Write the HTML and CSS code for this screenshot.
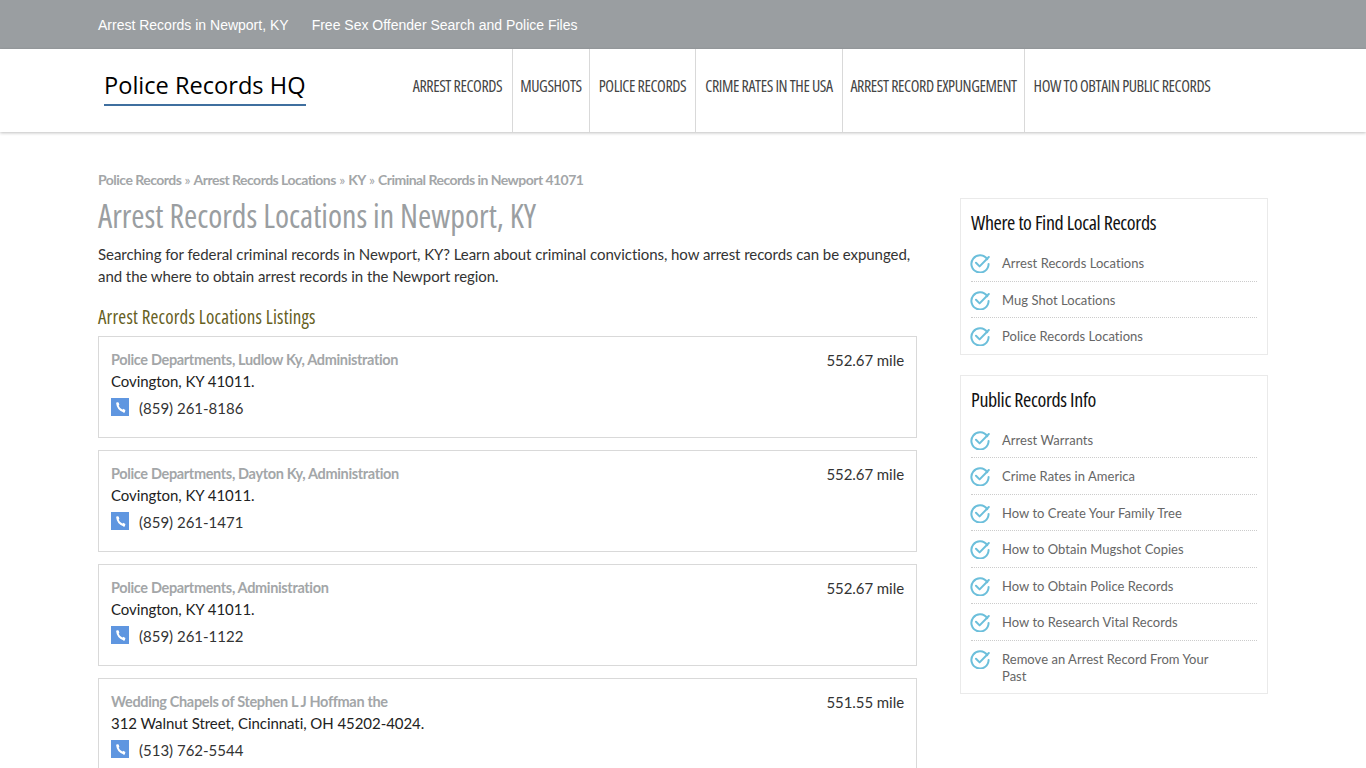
FILE: index.html
```html
<!doctype html>
<html lang="en">
<head>
  <title>Arrest Records Locations in Newport, KY</title>
  <meta http-equiv="Content-Type" content="text/html; charset=UTF-8" />
  <meta name="viewport" content="width=device-width, initial-scale=1.0">
  <link rel="stylesheet" href="styles.css">
</head>
<body>
  <svg class="defs" width="0" height="0">
    <symbol id="check" viewBox="0 0 20 20">
      <path d="M17.2 6.2A8.6 8.6 0 1 0 18.6 11" fill="none" stroke="#6cbfdb" stroke-width="2" stroke-linecap="round"/>
      <path d="M6 9.8l3.6 3.6L18.8 4" fill="none" stroke="#6cbfdb" stroke-width="2" stroke-linecap="round" stroke-linejoin="round"/>
    </symbol>
    <symbol id="phone" viewBox="0 0 18 18">
      <rect width="18" height="18" fill="#5f96e0"/>
      <path d="M6.4 5.6c0 3.4 2.6 6.6 6.4 7.6" fill="none" stroke="#fff" stroke-width="2.2" stroke-linecap="round"/>
      <path d="M5.4 4.4h2.2l.8 2.6-2.2.8zM11.4 12.4l.8-1.6 2.2 1.2-.6 2.4h-1.6z" fill="#fff"/>
    </symbol>
  </svg>

  <div class="topbar">
    <div class="container">
      <a href="#">Arrest Records in Newport, KY</a>
      <a href="#">Free Sex Offender Search and Police Files</a>
    </div>
  </div>

  <header class="header">
    <div class="container header-row">
      <a class="logo" href="#">Police Records HQ</a>
      <nav class="nav">
        <a href="#">Arrest Records</a>
        <a href="#">Mugshots</a>
        <a href="#">Police Records</a>
        <a href="#">Crime Rates in the USA</a>
        <a href="#">Arrest Record Expungement</a>
        <a href="#">How to Obtain Public Records</a>
      </nav>
    </div>
  </header>

  <div class="container page">
    <main class="main">
      <div class="crumbs">
        <a href="#">Police Records</a> » <a href="#">Arrest Records Locations</a> » <a href="#">KY</a> » <a href="#">Criminal Records in Newport 41071</a>
      </div>
      <h1>Arrest Records Locations in Newport, KY</h1>
      <p class="intro">Searching for federal criminal records in Newport, KY? Learn about criminal convictions, how arrest records can be expunged, and the where to obtain arrest records in the Newport region.</p>
      <h2>Arrest Records Locations Listings</h2>

      <div class="card">
        <div class="card-top"><a href="#">Police Departments, Ludlow Ky, Administration</a><span class="dist">552.67 mile</span></div>
        <div class="addr">Covington, KY 41011.</div>
        <div class="tel"><svg width="18" height="18"><use href="#phone"/></svg>(859) 261-8186</div>
      </div>
      <div class="card">
        <div class="card-top"><a href="#">Police Departments, Dayton Ky, Administration</a><span class="dist">552.67 mile</span></div>
        <div class="addr">Covington, KY 41011.</div>
        <div class="tel"><svg width="18" height="18"><use href="#phone"/></svg>(859) 261-1471</div>
      </div>
      <div class="card">
        <div class="card-top"><a href="#">Police Departments, Administration</a><span class="dist">552.67 mile</span></div>
        <div class="addr">Covington, KY 41011.</div>
        <div class="tel"><svg width="18" height="18"><use href="#phone"/></svg>(859) 261-1122</div>
      </div>
      <div class="card">
        <div class="card-top"><a href="#">Wedding Chapels of Stephen L J Hoffman the</a><span class="dist">551.55 mile</span></div>
        <div class="addr">312 Walnut Street, Cincinnati, OH 45202-4024.</div>
        <div class="tel"><svg width="18" height="18"><use href="#phone"/></svg>(513) 762-5544</div>
      </div>
    </main>

    <aside class="side">
      <div class="box">
        <h3>Where to Find Local Records</h3>
        <ul>
          <li><svg width="20" height="20"><use href="#check"/></svg><a href="#">Arrest Records Locations</a></li>
          <li><svg width="20" height="20"><use href="#check"/></svg><a href="#">Mug Shot Locations</a></li>
          <li><svg width="20" height="20"><use href="#check"/></svg><a href="#">Police Records Locations</a></li>
        </ul>
      </div>
      <div class="box">
        <h3>Public Records Info</h3>
        <ul>
          <li><svg width="20" height="20"><use href="#check"/></svg><a href="#">Arrest Warrants</a></li>
          <li><svg width="20" height="20"><use href="#check"/></svg><a href="#">Crime Rates in America</a></li>
          <li><svg width="20" height="20"><use href="#check"/></svg><a href="#">How to Create Your Family Tree</a></li>
          <li><svg width="20" height="20"><use href="#check"/></svg><a href="#">How to Obtain Mugshot Copies</a></li>
          <li><svg width="20" height="20"><use href="#check"/></svg><a href="#">How to Obtain Police Records</a></li>
          <li><svg width="20" height="20"><use href="#check"/></svg><a href="#">How to Research Vital Records</a></li>
          <li><svg width="20" height="20"><use href="#check"/></svg><a href="#">Remove an Arrest Record From Your Past</a></li>
        </ul>
      </div>
    </aside>
  </div>
</body>
</html>
```
FILE: styles.css
```css
:root {
  --body-font: Lato, "Open Sans", sans-serif;
  --head-font: "Open Sans", sans-serif;
  --grey: #9a9ea1;
  --line: #d9d9d9;
}

* {
  box-sizing: border-box;
}

html, body {
  height: 768px;
  overflow: hidden;
}

body {
  margin: 0;
  font-family: var(--body-font);
  font-size: 15px;
  letter-spacing: -0.06px;
  color: #333;
  background: #fff;
}

a {
  text-decoration: none;
  color: inherit;
}

.defs {
  position: absolute;
}

.container {
  width: 1170px;
  margin-left: 98px;
}

/* top strip */
.topbar {
  height: 49px;
  background: var(--grey);
}

.topbar .container {
  display: flex;
  gap: 23px;
  padding-top: 16px;
}

.topbar a {
  font-family: "Liberation Sans", Arial, sans-serif;
  font-size: 14px;
  letter-spacing: 0;
  line-height: 18px;
  color: #fff;
}

/* header */
.header {
  height: 83px;
  background: #fff;
  box-shadow: 0 1px 3px rgba(0, 0, 0, 0.25);
}

.header-row {
  display: flex;
  height: 83px;
}

.logo {
  width: 305px;
  padding: 20px 0 0 6px;
  font-family: "Open Sans", sans-serif;
  font-size: 23.6px;
  font-weight: 500;
  letter-spacing: 0;
  line-height: 32px;
  color: #000;
}

.logo::after {
  content: "";
  display: block;
  width: 202px;
  height: 2px;
  margin-top: 3px;
  background: #3f6f9f;
}

.nav {
  display: flex;
}

.nav a {
  display: flex;
  align-items: center;
  justify-content: center;
  padding-bottom: 10px;
  height: 83px;
  border-right: 1px solid var(--line);
  font-family: var(--head-font);
  font-stretch: 75%;
  font-size: 16px;
  letter-spacing: -0.4px;
  white-space: nowrap;
  text-transform: uppercase;
  color: #444;
}

.nav a:nth-child(1) { width: 110px; }
.nav a:nth-child(2) { width: 77px; }
.nav a:nth-child(3) { width: 106px; }
.nav a:nth-child(4) { width: 147px; }
.nav a:nth-child(5) { width: 182px; }
.nav a:nth-child(6) { width: 194px; border-right: 0; }

/* page */
.page {
  display: flex;
  justify-content: space-between;
}

.main {
  width: 819px;
  padding-top: 39px;
}

.crumbs {
  font-size: 14px;
  line-height: 18px;
  color: #a3a6a8;
  letter-spacing: -0.3px;
}

.crumbs a {
  font-weight: 700;
  letter-spacing: -0.53px;
}

h1 {
  margin: 7px 0 0;
  font-family: var(--head-font);
  font-stretch: 75%;
  font-size: 32px;
  letter-spacing: 0;
  line-height: 40px;
  font-weight: 400;
  color: #9a9ea1;
}

.intro {
  margin: 7px 0 0;
  line-height: 22px;
}

h2 {
  margin: 17px 0 0;
  font-family: var(--head-font);
  font-stretch: 75%;
  font-size: 19px;
  letter-spacing: 0.18px;
  line-height: 26px;
  font-weight: 400;
  color: #66601e;
}

.card {
  height: 102px;
  margin-top: 12px;
  padding: 12px 12px 0;
  border: 1px solid var(--line);
}

h2 + .card {
  margin-top: 6px;
}

.card-top {
  display: flex;
  justify-content: space-between;
  line-height: 22px;
}

.card-top a {
  font-size: 14.5px;
  font-weight: 700;
  color: #a3a6a8;
  letter-spacing: -0.35px;
}

.addr {
  line-height: 20px;
  color: #222;
}

.tel {
  display: flex;
  align-items: flex-start;
  gap: 10px;
  margin-top: 7px;
  line-height: 20px;
  letter-spacing: 0;
}

/* sidebar */
.side {
  width: 308px;
  padding-top: 66px;
}

.box {
  margin-bottom: 20px;
  padding: 10px 10px 0;
  border: 1px solid #eaeaea;
}

h3 {
  margin: 0 0 8px;
  font-family: var(--head-font);
  font-stretch: 75%;
  font-size: 20px;
  letter-spacing: -0.35px;
  line-height: 28px;
  font-weight: 400;
  color: #111;
}

.box ul {
  margin: 0;
  padding: 0;
  list-style: none;
}

.box li {
  display: flex;
  gap: 12px;
  padding: 10px 40px 7.5px 0;
  font-size: 13px;
  letter-spacing: 0.03px;
  line-height: 17px;
  color: #666;
  border-bottom: 1px dotted #ccc;
}

.box li:last-child {
  border-bottom: 0;
}

.box + .box li:last-child {
  padding-bottom: 8.5px;
}

.box li svg {
  flex: none;
  margin: -2px 0 0 -1px;
}
```
